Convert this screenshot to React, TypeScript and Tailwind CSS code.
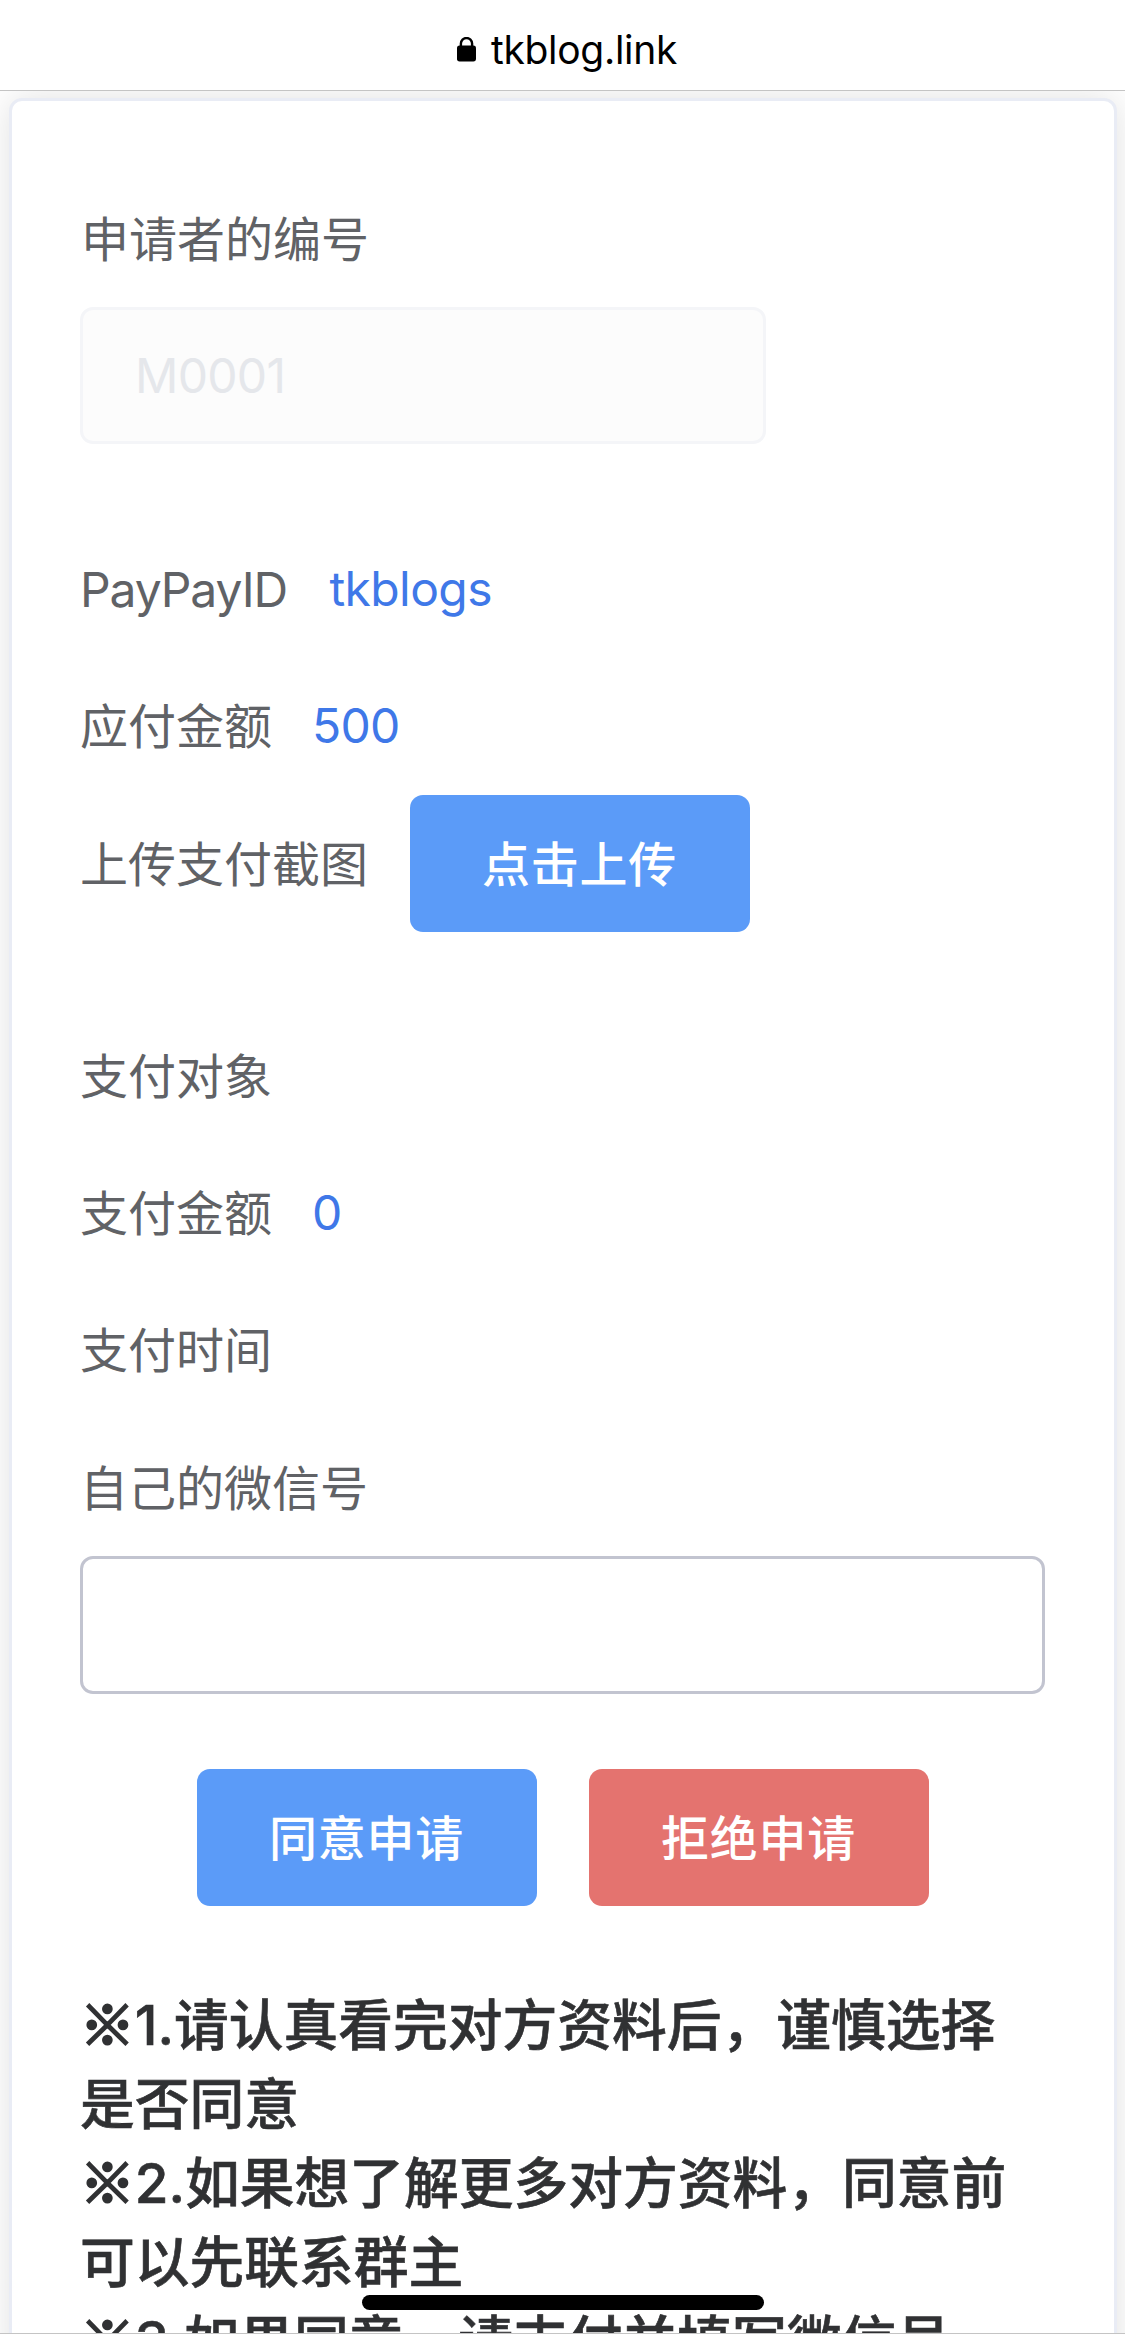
import type { ReactNode } from "react";

function LockIcon() {
  return (
    <svg width="19" height="25" viewBox="0 0 19 25" className="mb-px" aria-hidden="true">
      <path d="M3.9 10V6.6a5.6 5.6 0 0 1 11.2 0V10" fill="none" stroke="#000" strokeWidth="2.4" />
      <rect x="0" y="8.6" width="19" height="15.8" rx="2.6" fill="#000" />
    </svg>
  );
}

function Row({ label, children }: { label: ReactNode; children?: ReactNode }) {
  return (
    <div className="flex h-[137.25px] items-center whitespace-nowrap">
      <span className="pt-[3px] text-[#606266]">{label}</span>
      {children}
    </div>
  );
}

function Value({ className = "", children }: { className?: string; children: ReactNode }) {
  return <span className={`ml-[40px] pt-px text-[#3f78e8] ${className}`}>{children}</span>;
}

function Button({ className, children }: { className: string; children: ReactNode }) {
  return (
    <button
      className={`flex h-[137.25px] w-[340px] items-center justify-center rounded-[13px] pt-[3px] font-medium text-white ${className}`}
    >
      <span className="tracking-[0.8px]">{children}</span>
    </button>
  );
}

function NoteMark({ number }: { number: number }) {
  return (
    <>
      <span className="font-['Noto_Sans_CJK_SC',sans-serif] leading-[0] font-bold [-webkit-text-stroke:2.5px_#303133]">※</span>
      <span>{number}.</span>
    </>
  );
}

export default function App() {
  return (
    <div
      lang="zh-CN"
      className="relative flex h-[2334px] w-[1125px] flex-col overflow-hidden bg-white font-['Inter','Noto_Sans_CJK_SC',sans-serif] text-[48px] leading-[64px]"
    >
      <header className="z-10 flex h-[91px] shrink-0 items-center justify-center gap-[15px] border-b border-[#c4c4c4] bg-white pt-[9px] pl-[9px] text-black">
        <LockIcon />
        <span className="text-[39px] leading-[48px] tracking-[-0.3px]">tkblog.link</span>
      </header>

      <main className="mx-[8.5px] mt-[6.5px] h-[2700px] shrink-0 rounded-[13px] border-[3.5px] border-[#e9ecf5] bg-white px-[68.5px] pt-[69px] shadow-[0_0_36px_rgba(0,0,0,0.12)]">
        <Row label={<span className="ml-px">申请者的编号</span>} />
        <div className="flex h-[137.25px] w-[686px] items-center rounded-[13px] border-[3px] border-[#f4f5f8] bg-[#fcfcfc] pt-[2px] pl-[52px] tracking-[-0.7px] text-[#e5e7eb]">
          M0001
        </div>

        <div className="mt-[76px]">
          <Row label={<span className="tracking-[-1.1px]">PayPayID</span>}>
            <Value className="pl-[2.5px] tracking-[-0.6px]">tkblogs</Value>
          </Row>
          <Row label="应付金额">
            <Value className="tracking-[-0.7px]">500</Value>
          </Row>
          <Row label="上传支付截图">
            <Button className="ml-[41.5px] bg-[#5b9bf8]">点击上传</Button>
          </Row>
        </div>

        <div className="mt-[75px]">
          <Row label="支付对象" />
          <Row label="支付金额">
            <Value>0</Value>
          </Row>
          <Row label="支付时间" />
          <Row label="自己的微信号" />
        </div>
        <div className="h-[138px] rounded-[13px] border-[3.5px] border-[#c2c4d0] bg-white" />

        <div className="mt-[75px] flex justify-center gap-[52px]">
          <Button className="bg-[#5b9bf8]">同意申请</Button>
          <Button className="bg-[#e4736f]">拒绝申请</Button>
        </div>

        <div className="mt-[80px] whitespace-nowrap text-[54.75px] leading-[79px] font-medium text-[#303133] [-webkit-text-stroke:0.6px_#303133]">
          <p>
            <NoteMark number={1} />
            请认真看完对方资料后，谨慎选择
            <br />
            是否同意
          </p>
          <p>
            <NoteMark number={2} />
            如果想了解更多对方资料，同意前
            <br />
            可以先联系群主
          </p>
          <p>
            <NoteMark number={3} />
            如果同意，请支付并填写微信号
          </p>
        </div>
      </main>

      <div className="absolute bottom-0 left-0 z-10 h-px w-full bg-[#c4c4c4]" />
      <div className="absolute bottom-[24px] left-[362px] z-10 h-[15px] w-[402px] rounded-full bg-black" />
    </div>
  );
}
